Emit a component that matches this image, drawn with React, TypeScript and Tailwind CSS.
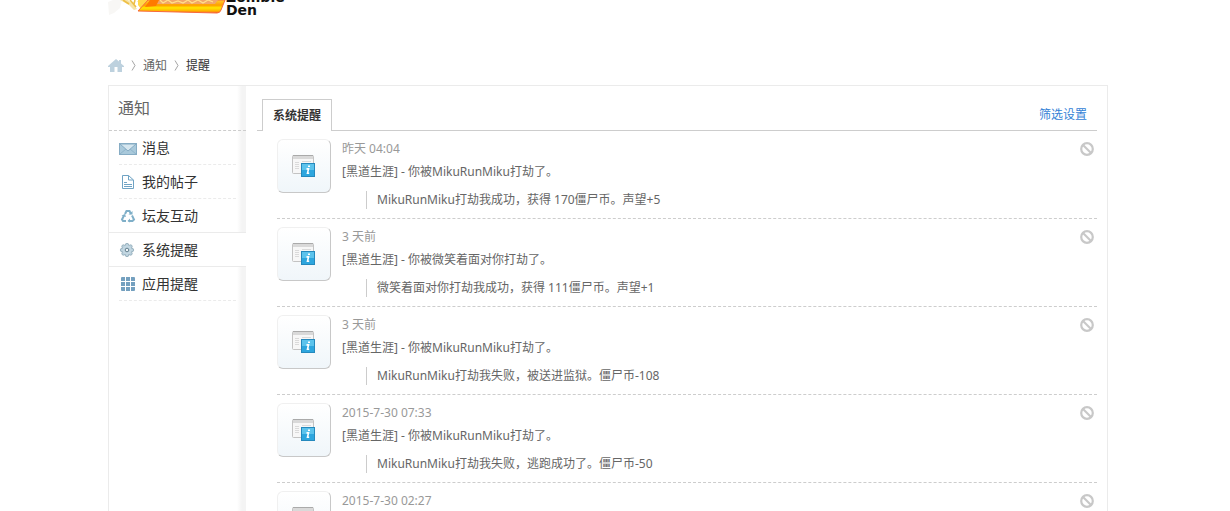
import clsx from 'clsx';

const MENU = [
    { label: '消息', icon: <MailIcon /> },
    { label: '我的帖子', icon: <PostIcon /> },
    { label: '坛友互动', icon: <CycleIcon /> },
    { label: '系统提醒', icon: <GearIcon />, active: true },
    { label: '应用提醒', icon: <GridIcon /> },
];

const NOTICES = [
    { time: '昨天 04:04', who: 'MikuRunMiku', detail: 'MikuRunMiku打劫我成功，获得 170僵尸币。声望+5' },
    { time: '3 天前', who: '微笑着面对你', detail: '微笑着面对你打劫我成功，获得 111僵尸币。声望+1' },
    { time: '3 天前', who: 'MikuRunMiku', detail: 'MikuRunMiku打劫我失败，被送进监狱。僵尸币-108' },
    { time: '2015-7-30 07:33', who: 'MikuRunMiku', detail: 'MikuRunMiku打劫我失败，逃跑成功了。僵尸币-50' },
    { time: '2015-7-30 02:27', who: 'MikuRunMiku', detail: 'MikuRunMiku打劫我失败，逃跑成功了。僵尸币-50' },
];

function MailIcon() {
    return (
        <svg width="18" height="14" viewBox="0 0 18 14">
            <rect x="0.5" y="2.5" width="17" height="11" fill="#a9c9db" stroke="#86acc4" />
            <path d="M1 13l6-5M17 13l-6-5" stroke="#8fb4ca" fill="none" />
            <path d="M1 3l8 7 8-7z" fill="#d5e6ef" stroke="#86acc4" />
        </svg>
    );
}

function PostIcon() {
    return (
        <svg width="18" height="14" viewBox="0 0 18 14" fill="none" stroke="#6fa3c4">
            <path d="M3.5 0.5h6l5 4.500v8.500h-11zM9.5 0.5v4.500h5" />
            <path d="M5 7.5h3M5 9.5h8M5 11.5h8" />
        </svg>
    );
}

function CycleIcon() {
    return (
        <svg width="18" height="14" viewBox="0 0 18 14" fill="none" stroke="#7fafc8" strokeWidth="2">
            <path d="M6 5L7.5 2h3l1.500 3" />
            <path d="M13 6.500l2 4-1.500 1.500h-4" />
            <path d="M7 12H4l-1-1.500 2-4" />
            <path d="M9.500 5.500h4V2zM11 9.500v4L8.500 12zM2.500 6.500L6 5l1 3z" fill="#7fafc8" stroke="none" />
        </svg>
    );
}

function GearIcon() {
    return (
        <svg width="18" height="14" viewBox="0 0 18 14">
            <g fill="#b9cfdb" stroke="#8ea9b8" strokeWidth="0.8">
                <circle cx="8" cy="2" r="1.7" />
                <circle cx="8" cy="12" r="1.7" />
                <circle cx="3" cy="7" r="1.7" />
                <circle cx="13" cy="7" r="1.7" />
                <circle cx="4.5" cy="3.5" r="1.7" />
                <circle cx="11.5" cy="3.5" r="1.7" />
                <circle cx="4.5" cy="10.5" r="1.7" />
                <circle cx="11.5" cy="10.5" r="1.7" />
            </g>
            <circle cx="8" cy="7" r="4.7" fill="#c3d7e2" />
            <circle cx="8" cy="7" r="1.8" fill="#eef4f7" stroke="#64808f" />
        </svg>
    );
}

function GridIcon() {
    return (
        <svg width="18" height="14" viewBox="0 0 18 14">
            <rect x="2" width="14" height="14" rx="1" fill="#74a0bf" />
            <path d="M6.5 0v14M11.5 0v14M2 4.5h14M2 9.5h14" stroke="#fff" />
        </svg>
    );
}

function HomeIcon() {
    return (
        <svg width="16" height="13" viewBox="0 0 16 13" fill="#bdd1de">
            <path d="M8 0l3 2.500V1h2v3.500L16 7v1h-2v5H9.500V8h-3v5H2V8H0V7z" />
        </svg>
    );
}

function Separator() {
    return (
        <svg width="5" height="11" viewBox="0 0 5 11" fill="none" stroke="#a5a5a5">
            <path d="M1 0.5l3 5-3 5" />
        </svg>
    );
}

function BlockIcon() {
    return (
        <svg width="14" height="14" viewBox="0 0 14 14" fill="none" stroke="#c8c8c8" strokeWidth="2.2">
            <circle cx="7" cy="7" r="5.8" />
            <path d="M3 3l8 8" />
        </svg>
    );
}

function NoticeIcon() {
    return (
        <svg width="24" height="24" viewBox="0 0 24 24">
            <rect x="0.5" y="1.5" width="21" height="18" rx="1" fill="#f7f7f7" stroke="#c3c3c3" />
            <path d="M1 2h20v3H1z" fill="#d9d9d9" />
            <path d="M1 1.5h20" stroke="#aaa" />
            <path d="M3 8.5h4M3 10.5h4M3 12.5h4M3 14.5h4M10 7.5h9" stroke="#dadada" />
            <rect x="9.5" y="9.5" width="13" height="13" fill="#2ea6de" stroke="#2589bd" />
            <path d="M10 10h12v6H10z" fill="#5cc3ec" />
            <path d="M16 12.2h2M14.5 14.9h2l-1 4.300h1.700" fill="none" stroke="#fff" strokeWidth="1.6" />
        </svg>
    );
}

function LogoArt() {
    return (
        <svg width="118" height="15" viewBox="0 0 118 15" className="shrink-0">
            <defs>
                <linearGradient id="flame" x1="0" x2="0" y1="0" y2="1">
                    <stop offset="0" stopColor="#ffcf2e" />
                    <stop offset="0.4" stopColor="#ff9d00" />
                    <stop offset="0.6" stopColor="#ffe600" />
                    <stop offset="0.85" stopColor="#ffb000" />
                    <stop offset="1" stopColor="#f4602a" />
                </linearGradient>
            </defs>
            {/* smoke and sparks on the left */}
            <path d="M0 2l5-2h9l-2 8-6 5-5 2z" fill="#f8f7f5" />
            <path d="M12 0h8l6 5 3 4-3 1-5-5z" fill="#f6e3a6" />
            <path d="M15 0l6 4M22 0l6 7M27 0l-1 4M30 1l3 3" stroke="#eebf45" strokeWidth="1.6" />
            <path d="M30 0h10l-7 9-3-4z" fill="#ffd84a" />
            <path d="M40 0h77l-4 10q-1 3-4 3L30 11z" fill="url(#flame)" stroke="#f76a3c" />
            <path d="M52 0h58l-3 4H47z" fill="#f2a66a" />
            <path d="M42 0l-5 7 11-1 3-6z" fill="#ff7a00" />
            <path d="M52 0l3 3 5-3 4 3 6-2 5 2 5-3 4 3 6-3 5 3 5-3 5 2" fill="none" stroke="#ffdf8a" strokeWidth="1.3" />
        </svg>
    );
}

export default function App() {
    return (
        <div className="bg-white pr-3.5 text-xs text-[#666] font-['Noto_Sans','Noto_Sans_CJK_SC',sans-serif]">
            <div className="mx-auto max-w-[1000px]">
                <header className="flex h-[46px] items-start overflow-hidden">
                    <LogoArt />
                    <p className="-mt-[9px] font-['DejaVu_Sans',sans-serif] text-sm leading-[13px] font-bold text-[#111]">
                        Zombie
                        <br />
                        Den
                    </p>
                </header>

                <nav className="flex h-[39px] items-center gap-[7px]">
                    <a href="#" aria-label="首页">
                        <HomeIcon />
                    </a>
                    <Separator />
                    <a href="#">通知</a>
                    <Separator />
                    <span className="text-[#333]">提醒</span>
                </nav>

                <div className="flex border border-[#ebebeb]">
                    <aside className="w-[137px] shrink-0 bg-[linear-gradient(to_right,#fff_128px,#f4f4f4_133px)]">
                        <h2 className="h-[45px] border-b border-dashed border-[#cdcdcd] pl-[9px] text-base leading-[44px]">通知</h2>
                        <ul>
                            {MENU.map((item) => (
                                <li
                                    key={item.label}
                                    className={clsx('px-[10px]', item.active && '-mt-px border-y border-[#ebebeb] bg-white')}
                                >
                                    <a
                                        href="#"
                                        className={clsx(
                                            'flex items-center gap-[5px] text-sm text-[#333]',
                                            item.active ? 'h-[33px]' : 'h-[34px] border-b border-dashed border-[#ebebeb]'
                                        )}
                                    >
                                        {item.icon}
                                        {item.label}
                                    </a>
                                </li>
                            ))}
                        </ul>
                    </aside>

                    <main className="min-w-0 flex-1 pt-[13px] pr-[10px] pl-[11px]">
                        <div className="flex h-8 items-center justify-between border-b border-[#cdcdcd] pr-[10px] pl-[5px]">
                            <a
                                href="#"
                                className="-mb-px h-8 border border-b-0 border-[#cdcdcd] bg-white px-[10px] leading-8 font-bold text-[#333]"
                            >
                                系统提醒
                            </a>
                            <a href="#" className="text-[#3382d6]">
                                筛选设置
                            </a>
                        </div>

                        <ul className="pl-5">
                            {NOTICES.map((notice, index) => (
                                <li key={index} className="flex items-start border-b border-dashed border-[#cdcdcd]">
                                    <div className="mt-2 mr-[11px] flex size-[54px] shrink-0 items-center justify-center rounded-md border border-t-[#f0f0f0] border-r-[#c8c8c8] border-b-[#c8c8c8] border-l-[#f0f0f0] bg-linear-to-b from-white to-[#f0f6fa]">
                                        <NoticeIcon />
                                    </div>
                                    <div className="min-w-0 flex-1 pt-[6px] pb-[9px] leading-[23px]">
                                        <p className="text-[#999]">{notice.time}</p>
                                        <p>[黑道生涯] - 你被{notice.who}打劫了。</p>
                                        <blockquote className="mt-2 ml-6 border-l border-[#ccc] pl-[10px] leading-[18px]">
                                            {notice.detail}
                                        </blockquote>
                                    </div>
                                    <button type="button" aria-label="屏蔽" className="mt-[11px] mr-[3px]">
                                        <BlockIcon />
                                    </button>
                                </li>
                            ))}
                        </ul>
                    </main>
                </div>
            </div>
        </div>
    );
}
